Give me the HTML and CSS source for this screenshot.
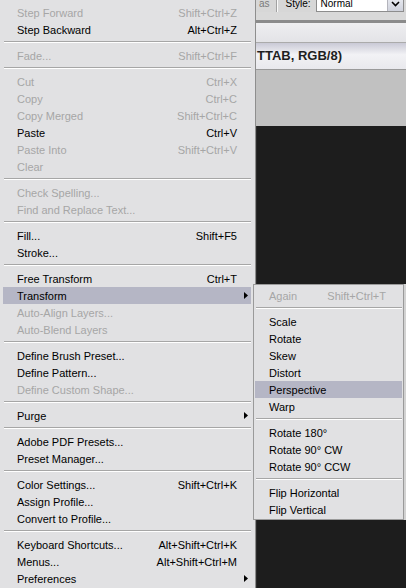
FILE: index.html
```html
<!doctype html>
<html>
 <head>
	<meta charset="UTF-8">
	<title>Edit</title>
	<link rel="stylesheet" href="styles.css">
 </head>
 <body>
	<div class="app">
		<!-- Edit 菜单 -->
		<ul class="menu list">
			<li class="off">Step Forward<span>Shift+Ctrl+Z</span></li>
			<li>Step Backward<span>Alt+Ctrl+Z</span></li>
			<li class="sep"></li>
			<li class="off">Fade...<span>Shift+Ctrl+F</span></li>
			<li class="sep"></li>
			<li class="off">Cut<span>Ctrl+X</span></li>
			<li class="off">Copy<span>Ctrl+C</span></li>
			<li class="off">Copy Merged<span>Shift+Ctrl+C</span></li>
			<li>Paste<span>Ctrl+V</span></li>
			<li class="off">Paste Into<span>Shift+Ctrl+V</span></li>
			<li class="off">Clear</li>
			<li class="sep"></li>
			<li class="off">Check Spelling...</li>
			<li class="off">Find and Replace Text...</li>
			<li class="sep"></li>
			<li>Fill...<span>Shift+F5</span></li>
			<li>Stroke...</li>
			<li class="sep"></li>
			<li>Free Transform<span>Ctrl+T</span></li>
			<li class="hot more">Transform</li>
			<li class="off">Auto-Align Layers...</li>
			<li class="off">Auto-Blend Layers</li>
			<li class="sep"></li>
			<li>Define Brush Preset...</li>
			<li>Define Pattern...</li>
			<li class="off">Define Custom Shape...</li>
			<li class="sep"></li>
			<li class="more">Purge</li>
			<li class="sep"></li>
			<li>Adobe PDF Presets...</li>
			<li>Preset Manager...</li>
			<li class="sep"></li>
			<li>Color Settings...<span>Shift+Ctrl+K</span></li>
			<li>Assign Profile...</li>
			<li>Convert to Profile...</li>
			<li class="sep"></li>
			<li>Keyboard Shortcuts...<span>Alt+Shift+Ctrl+K</span></li>
			<li>Menus...<span>Alt+Shift+Ctrl+M</span></li>
			<li class="more">Preferences</li>
		</ul>
		<div class="work">
			<div class="opts">
				<span class="opt_lbl">as</span>
				<span class="opt_div"></span>
				<span class="style_lbl">Style:</span>
				<span class="select">Normal
					<span class="select_btn">
						<svg width="9" height="6" viewBox="0 0 9 6"><path d="M1 1 L4.5 4.5 L8 1" fill="none" stroke="#000" stroke-width="1.6"/></svg>
					</span>
				</span>
			</div>
			<div class="opts_foot"></div>
			<div class="band"></div>
			<div class="doc_top"></div>
			<div class="doc_title">TTAB, RGB/8)</div>
			<div class="doc_gray"></div>
			<div class="canvas"></div>
		</div>
	</div>
	<!-- Transform 子菜单 -->
	<ul class="sub list">
		<li class="off">Again<span>Shift+Ctrl+T</span></li>
		<li class="sep"></li>
		<li>Scale</li>
		<li>Rotate</li>
		<li>Skew</li>
		<li>Distort</li>
		<li class="hot">Perspective</li>
		<li>Warp</li>
		<li class="sep"></li>
		<li>Rotate 180°</li>
		<li>Rotate 90° CW</li>
		<li>Rotate 90° CCW</li>
		<li class="sep"></li>
		<li>Flip Horizontal</li>
		<li>Flip Vertical</li>
	</ul>
 </body>
</html>
```

FILE: styles.css
```css
body{
	margin:0;
	background:#1d1d1d;
	font-family:"Liberation Sans",Arial,sans-serif;
	font-size:11px;
	overflow:hidden;
}
.app{display:flex;height:588px}

/* 菜单公共样式 */
.list{list-style:none;margin:0;background:#e1e1e3;color:#000}
.list li{
	display:flex;
	justify-content:space-between;
	height:15px;line-height:15px;
	padding:2px 14px 0;
	position:relative;
	white-space:nowrap;
}
.list li.sep{
	height:0;padding:0;
	margin:3px 0 4px 1px;
	border-top:1px solid #a6a6a6;
	border-bottom:1px solid #fff;
}
.list .off{color:#a6a6a6}
.list .hot{background:#b5b6c5}
.list .more::after{/*子菜单箭头*/
	content:"";
	position:absolute;right:3px;top:5px;
	width:4px;height:7px;
	background:#000;
	clip-path:polygon(0 0,100% 50%,0 100%);
}

.menu{
	flex:none;
	width:248px;
	padding:4px 4px 0 3px;
	border-right:1px solid #8e8e8e;
}
.sub{
	position:absolute;left:253px;top:284px;
	width:147px;
	padding:2px 1px 1px;
	border:1px solid #9a9a9a;
	box-shadow:2px 0 0 #d2d2d2;
}
.sub li{padding-right:16px}

/* 右侧工作区 */
.work{flex:1;display:flex;flex-direction:column;min-width:0}
.opts{
	height:17px;margin-top:-5px;
	display:flex;align-items:center;
	background:#d7d7d7;
	font-size:10px;
	line-height:12px;
}
.opt_lbl{padding-left:3px;color:#7a7a7a}
.opt_div{
	align-self:stretch;
	margin-left:6px;
	border-left:1px solid #a2a2a2;
	border-right:1px solid #fafafa;
}
.style_lbl{margin-left:8px}
.select{
	position:relative;
	margin-left:5px;
	width:82px;height:15px;line-height:16px;
	padding-left:4px;
	background:#fff;
	border:1px solid #8d8d8d;
}
.select_btn{
	position:absolute;right:0;top:0;
	width:15px;height:15px;
	display:flex;align-items:center;justify-content:center;
	background:linear-gradient(#eceef4,#cfd2dc);
	border-left:1px solid #b4b4bc;
}
.opts_foot{height:8px;background:#d9d9d9}
.band{height:3px;background:#8b8b8b}
.doc_top{
	height:19px;
	background:linear-gradient(#eeeef0,#e3e3e7);
	border-bottom:1px solid #ababab;
}
.doc_title{
	height:26px;line-height:26px;
	padding-left:1px;
	background:linear-gradient(#c9c9d6,#f2f2f5 45%,#e9e9ed);
	border-bottom:1px solid #9a9a9a;
	color:#1e1e1e;
	font-size:13px;font-weight:bold;
	white-space:nowrap;
}
.doc_gray{height:56px;background:#c1c1c1}
.canvas{flex:1;background:#1d1d1d;border-left:1px solid #2c2c2c}
```
